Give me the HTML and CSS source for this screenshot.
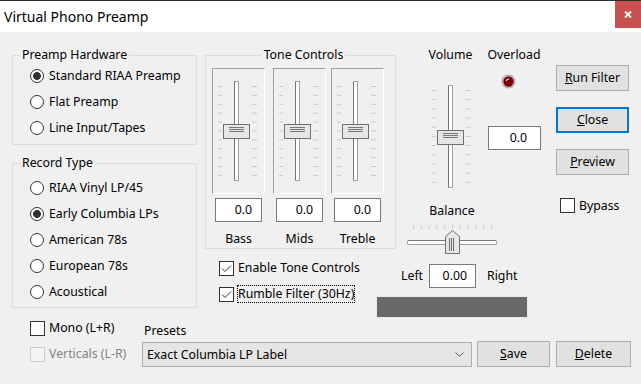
FILE: index.html
```html
<!DOCTYPE html>
<html lang="en">
<head>
    <meta charset="UTF-8">
    <meta name="viewport" content="width=device-width, initial-scale=1.0">
    <title>Virtual Phono Preamp</title>
    <link rel="stylesheet" href="styles.css">
</head>
<body>
<div class="window">
    <div class="titlebar">
        <span class="title">Virtual Phono Preamp</span>
        <span class="close-btn">
            <svg width="8" height="7" viewBox="0 0 8 7"><path d="M1 0.5 L7 6.5 M7 0.5 L1 6.5" stroke="#fff" stroke-width="1.8"/></svg>
        </span>
    </div>

    <div class="client">
        <div class="top-row">
            <!-- Left column: hardware + record type -->
            <div class="col-left">
                <fieldset class="group group-hw">
                    <legend>Preamp Hardware</legend>
                    <div class="radio"><span class="dot checked"></span>Standard RIAA Preamp</div>
                    <div class="radio"><span class="dot"></span>Flat Preamp</div>
                    <div class="radio"><span class="dot"></span>Line Input/Tapes</div>
                </fieldset>
                <fieldset class="group group-rec">
                    <legend>Record Type</legend>
                    <div class="radio"><span class="dot"></span>RIAA Vinyl LP/45</div>
                    <div class="radio"><span class="dot checked"></span>Early Columbia LPs</div>
                    <div class="radio"><span class="dot"></span>American 78s</div>
                    <div class="radio"><span class="dot"></span>European 78s</div>
                    <div class="radio"><span class="dot"></span>Acoustical</div>
                </fieldset>
            </div>

            <!-- Tone controls -->
            <div class="col-tone">
                <fieldset class="group group-tone">
                    <legend>Tone Controls</legend>
                    <div class="tone-cols">
                        <div class="tone-col">
                            <div class="slider-panel">
                                <div class="vslider"><div class="ticks"></div><div class="track"></div><div class="thumb"></div></div>
                            </div>
                            <div class="edit">0.0</div>
                            <div class="tone-label">Bass</div>
                        </div>
                        <div class="tone-col mids">
                            <div class="slider-panel">
                                <div class="vslider"><div class="ticks"></div><div class="track"></div><div class="thumb"></div></div>
                            </div>
                            <div class="edit">0.0</div>
                            <div class="tone-label">Mids</div>
                        </div>
                        <div class="tone-col treble">
                            <div class="slider-panel">
                                <div class="vslider"><div class="ticks"></div><div class="track"></div><div class="thumb"></div></div>
                            </div>
                            <div class="edit">0.0</div>
                            <div class="tone-label">Treble</div>
                        </div>
                    </div>
                </fieldset>
                <div class="tone-checks">
                    <div class="check"><span class="box"><svg width="13" height="13" viewBox="0 0 13 13"><polyline points="2,6.5 5,9.5 11,3.5" fill="none" stroke="#333" stroke-width="1"/></svg></span><span class="cap">Enable Tone Controls</span></div>
                    <div class="check"><span class="box"><svg width="13" height="13" viewBox="0 0 13 13"><polyline points="2,6.5 5,9.5 11,3.5" fill="none" stroke="#333" stroke-width="1"/></svg></span><span class="cap focused">Rumble Filter (30Hz)</span></div>
                </div>
            </div>

            <!-- Volume / overload / balance -->
            <div class="col-volume">
                <div class="vol-top">
                    <div class="vol-a">
                        <div class="caption">Volume</div>
                        <div class="vslider tall"><div class="ticks"></div><div class="track"></div><div class="thumb"></div></div>
                    </div>
                    <div class="vol-b">
                        <div class="caption">Overload</div>
                        <svg class="led" width="15" height="15" viewBox="0 0 15 15">
                            <circle cx="7.5" cy="7.5" r="7" fill="#a8a8a8"/>
                            <circle cx="7.5" cy="7.5" r="6" fill="#d4d4d4"/>
                            <circle cx="7.5" cy="7.5" r="5.2" fill="#7d0000"/>
                            <path d="M5.3 7 Q5.6 5 8 4.8" fill="none" stroke="#f2d0d0" stroke-width="1.2"/>
                        </svg>
                        <div class="edit edit-vol">0.0</div>
                    </div>
                </div>
                <div class="balance">
                    <div class="caption">Balance</div>
                    <div class="hslider">
                        <div class="hticks"></div>
                        <div class="htrack"></div>
                        <svg class="hthumb" width="15" height="24" viewBox="0 0 15 24">
                            <path d="M0.5 6.5 L7.5 0.5 L14.5 6.5 L14.5 23.5 L0.5 23.5 Z" fill="#e6e6e6" stroke="#707070"/>
                            <path d="M4.5 8 V21 M6.5 8 V21 M8.5 8 V21" stroke="#707070" stroke-width="1"/>
                        </svg>
                    </div>
                </div>
                <div class="lr-row">
                    <span class="lr-left">Left</span>
                    <div class="edit edit-bal">0.00</div>
                    <span class="lr-right">Right</span>
                </div>
                <div class="meter"></div>
            </div>

            <!-- Buttons -->
            <div class="col-buttons">
                <div class="btn"><u>R</u>un Filter</div>
                <div class="btn default"><u>C</u>lose</div>
                <div class="btn"><u>P</u>review</div>
                <div class="check bypass"><span class="box"></span><span class="cap">Bypass</span></div>
            </div>
        </div>

        <div class="bottom-row">
            <div class="mono-col">
                <div class="check"><span class="box"></span><span class="cap">Mono (L+R)</span></div>
                <div class="check disabled"><span class="box"></span><span class="cap">Verticals (L-R)</span></div>
            </div>
            <div class="presets-col">
                <div class="presets-label">Presets</div>
                <div class="combo">
                    <span>Exact Columbia LP Label</span>
                    <svg width="9" height="6" viewBox="0 0 9 6"><polyline points="0.5,0.5 4.5,4.5 8.5,0.5" fill="none" stroke="#555" stroke-width="1"/></svg>
                </div>
            </div>
            <div class="btn btn-save"><u>S</u>ave</div>
            <div class="btn btn-delete"><u>D</u>elete</div>
        </div>
    </div>
</div>
</body>
</html>
```

FILE: styles.css
```css
/* Windows-style dialog */
* {
    box-sizing: border-box;
}

body {
    margin: 0;
    font-family: "Noto Sans", sans-serif;
    font-size: 12.3px;
    line-height: 16px;
    color: #000;
    background: #f0f0f0;
}

.window {
    width: 641px;
    height: 384px;
    overflow: hidden;
}

/* Title bar */
.titlebar {
    display: flex;
    align-items: flex-start;
    height: 32px;
    background: #fff;
    border-top: 1px solid #2b2b2b;
}

.title {
    font-size: 14px;
    line-height: 20px;
    margin: 6px 0 0 4px;
}

.close-btn {
    margin-left: auto;
    width: 26px;
    height: 27px;
    background: #c75050;
    display: flex;
    align-items: center;
    justify-content: center;
}

.client {
    height: 352px;
    background: #f0f0f0;
}

.top-row {
    display: flex;
    height: 283px;
}

/* Group boxes */
.group {
    margin: 0;
    padding: 0;
    border: 1px solid #dcdcdc;
    min-width: 0;
}

.group legend {
    padding: 0 2px;
    margin-left: 7px;
    line-height: 16px;
}

.col-left {
    margin-left: 12px;
    width: 185px;
}

.group-hw {
    margin-top: 15px;
    padding-bottom: 3px;
}

.group-rec {
    margin-top: 10px;
    padding-top: 4px;
    padding-bottom: 2px;
}

.radio {
    display: flex;
    align-items: center;
    height: 26px;
    margin-left: 17px;
}

.dot {
    width: 14px;
    height: 14px;
    border: 1px solid #333;
    border-radius: 50%;
    background: #fff;
    margin-right: 5px;
    flex: none;
}

.dot.checked {
    background: radial-gradient(circle, #333 0 3.6px, #fff 4.2px);
}

/* Tone controls */
.col-tone {
    margin-left: 8px;
    width: 191px;
}

.group-tone {
    margin-top: 15px;
    padding: 5px 0 1px 6px;
}

.group-tone legend {
    margin-left: auto;
    margin-right: auto;
}

.tone-cols {
    display: flex;
}

.tone-col {
    width: 53px;
}

.tone-col.mids {
    margin-left: 8px;
}

.tone-col.treble {
    margin-left: 5px;
}

.slider-panel {
    width: 53px;
    height: 126px;
    padding: 12px 0 0 5px;
    border-top: 1px solid #a0a0a0;
    border-left: 1px solid #a0a0a0;
    border-right: 1px solid #fff;
    border-bottom: 1px solid #fff;
}

.vslider {
    position: relative;
    width: 39px;
    height: 100px;
}

.vslider.tall {
    height: 103px;
    margin: 22px 0 0 12px;
}

.ticks {
    position: absolute;
    left: 0;
    right: 0;
    top: 5px;
    bottom: 5px;
    background:
        linear-gradient(#c8c8c8 0 1px, transparent 1px) left top / 4px calc((100% - 1px) / 10) repeat-y,
        linear-gradient(#c8c8c8 0 1px, transparent 1px) right top / 5px calc((100% - 1px) / 10) repeat-y;
}

.track {
    position: absolute;
    left: 16px;
    width: 5px;
    top: 0;
    bottom: 0;
    background: #fff;
    border: 1px solid #a0a0a0;
    border-left-color: #757575;
    border-radius: 1px;
}

.thumb {
    position: absolute;
    left: 5px;
    width: 27px;
    height: 15px;
    top: calc(50% - 7px);
    background: #e6e6e6;
    border: 1px solid #6f6f6f;
}

.thumb::before {
    content: "";
    position: absolute;
    left: 5px;
    right: 5px;
    top: 2px;
    height: 5px;
    background: repeating-linear-gradient(#777 0 1px, transparent 1px 2px);
}

.edit {
    width: 47px;
    height: 24px;
    margin: 4px auto 0;
    border: 1px solid #7a7a7a;
    background: #fff;
    text-align: right;
    padding-right: 9px;
    line-height: 22px;
}

.tone-label {
    margin-top: 9px;
    text-align: center;
}

.tone-checks {
    margin-top: 6px;
}

.check {
    display: flex;
    align-items: center;
    height: 26px;
}

.tone-checks .check {
    margin-left: 14px;
}

.box {
    width: 15px;
    height: 15px;
    border: 1px solid #333;
    background: #fff;
    margin-right: 3px;
    flex: none;
    display: flex;
}

.cap {
    border: 1px dotted transparent;
    line-height: 16px;
    white-space: nowrap;
}

.cap.focused {
    border-color: #000;
}

/* Volume column */
.col-volume {
    margin-left: 4px;
    width: 145px;
}

.vol-top {
    display: flex;
    margin-top: 15px;
}

.caption {
    text-align: center;
    line-height: 16px;
    white-space: nowrap;
}

.vol-a {
    margin-left: 20px;
    width: 61px;
}

.vol-b {
    margin-left: 5px;
    width: 56px;
}

.led {
    display: block;
    margin: 11px 0 0 15px;
}

.edit-vol {
    width: 53px;
    margin: 37px 0 0 2px;
    padding-right: 13px;
}

.balance {
    width: 90px;
    margin-left: 7px;
}

.balance .caption {
    margin-top: 15px;
}

.hslider {
    position: relative;
    height: 30px;
    margin-top: 5px;
}

.hticks {
    position: absolute;
    left: 6px;
    width: 79px;
    top: 1px;
    height: 4px;
    background: linear-gradient(to right, #c8c8c8 0 1px, transparent 1px) left top / calc((100% - 1px) / 10) 100% repeat-x;
}

.htrack {
    position: absolute;
    left: 0;
    width: 90px;
    top: 16px;
    height: 5px;
    background: #fff;
    border: 1px solid #a0a0a0;
    border-top-color: #757575;
    border-radius: 2px;
}

.hthumb {
    position: absolute;
    left: 38px;
    top: 6px;
}

.lr-row {
    display: flex;
    align-items: center;
    height: 24px;
    margin-top: 10px;
}

.lr-left {
    width: 28px;
    margin-left: 1px;
}

.edit-bal {
    margin: 0;
    padding-right: 8px;
}

.lr-right {
    margin-left: 11px;
}

.meter {
    margin: 8px 0 0 -24px;
    width: 152px;
    height: 22px;
    background: #696969;
    border: 1px solid #e8e8e8;
}

/* Buttons */
.col-buttons {
    margin-left: 11px;
    width: 73px;
    padding-top: 33px;
}

.btn {
    height: 26px;
    width: 73px;
    border: 1px solid #adadad;
    background: #e1e1e1;
    text-align: center;
    line-height: 24px;
}

.btn + .btn {
    margin-top: 16px;
}

.btn.default {
    border: 2px solid #0078d7;
    line-height: 22px;
}

.bypass {
    margin: 23px 0 0 4px;
    height: 15px;
}

/* Bottom row */
.bottom-row {
    display: flex;
    align-items: flex-start;
}

.mono-col {
    margin-left: 30px;
    width: 112px;
}

.check.disabled .box {
    border-color: #cccccc;
    background: #f4f4f4;
}

.check.disabled .cap {
    color: #838383;
}

.presets-col {
    width: 330px;
}

.presets-label {
    margin-top: 8px;
    padding-left: 2px;
}

.combo {
    margin-top: 3px;
    height: 25px;
    border: 1px solid #adadad;
    background: #e5e5e5;
    display: flex;
    align-items: center;
    justify-content: space-between;
    padding: 0 7px 0 4px;
}

.btn-save {
    margin-top: 26px;
    margin-left: 5px;
}

.btn.btn-delete {
    margin-top: 26px;
    margin-left: 6px;
    width: 75px;
}
```
